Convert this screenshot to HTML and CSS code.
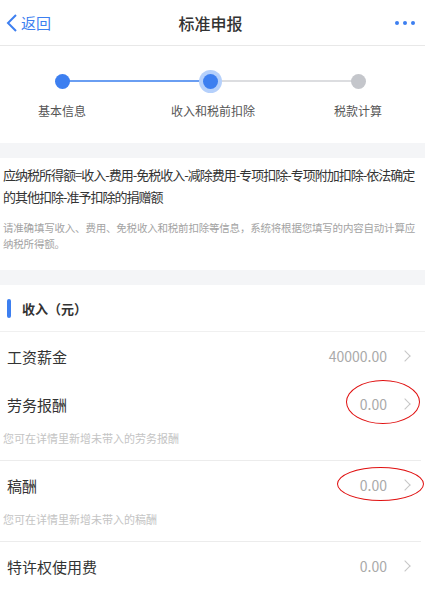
FILE: index.html
```html
<!DOCTYPE html>
<html lang="zh-CN">
<head>
  <meta charset="UTF-8">
  <title>标准申报</title>
  <meta name="viewport" content="width=device-width, initial-scale=1.0">
  <link rel="stylesheet" href="styles.css">
</head>
<body>
  <div class="header">
    <a class="back" href="#">
      <svg width="12" height="20" viewBox="0 0 12 20"><path d="M10 2 L2 10 L10 18" fill="none" stroke="#3d7ff0" stroke-width="2"/></svg>
      <span>返回</span>
    </a>
    <h1>标准申报</h1>
    <div class="more"><i></i><i></i><i></i></div>
  </div>

  <div class="steps">
    <div class="track">
      <div class="line done"></div>
      <div class="line"></div>
      <span class="dot done first"></span>
      <span class="dot current"></span>
      <span class="dot last"></span>
    </div>
    <div class="step-labels">
      <span>基本信息</span>
      <span>收入和税前扣除</span>
      <span>税款计算</span>
    </div>
  </div>

  <div class="gap"></div>

  <div class="intro">
    <p class="formula">应纳税所得额=收入-费用-免税收入-减除费用-专项扣除-专项附加扣除-依法确定的其他扣除-准予扣除的捐赠额</p>
    <p class="note">请准确填写收入、费用、免税收入和税前扣除等信息，系统将根据您填写的内容自动计算应纳税所得额。</p>
  </div>

  <div class="gap"></div>

  <div class="section-title"><span class="bar"></span>收入（元）</div>

  <div class="item">
    <div class="row"><span class="label">工资薪金</span><span class="value">40000.00</span><span class="arrow"></span></div>
  </div>
  <div class="item">
    <div class="row"><span class="label">劳务报酬</span><span class="value">0.00</span><span class="arrow"></span><span class="ring ring-a"></span></div>
    <div class="hint">您可在详情里新增未带入的劳务报酬</div>
  </div>
  <div class="item bordered">
    <div class="row"><span class="label">稿酬</span><span class="value">0.00</span><span class="arrow"></span><span class="ring ring-b"></span></div>
    <div class="hint">您可在详情里新增未带入的稿酬</div>
  </div>
  <div class="item bordered">
    <div class="row"><span class="label">特许权使用费</span><span class="value">0.00</span><span class="arrow"></span></div>
  </div>
</body>
</html>
```

FILE: styles.css
```css
body {
  margin: 0;
  font-family: "Noto Sans CJK SC", "Noto Sans", sans-serif;
  background: #fff;
  color: #333;
  overflow: hidden;
}

p {
  margin: 0;
}

.header {
  height: 45px;
  display: flex;
  align-items: center;
  justify-content: space-between;
  padding: 0 10px 0 6px;
  border-bottom: 1px solid #e8e8e8;
}

.back {
  display: flex;
  align-items: center;
  gap: 3px;
  width: 80px;
  color: #3d7ff0;
  text-decoration: none;
  font-size: 15px;
}

.header h1 {
  margin: 0;
  font-size: 16px;
  font-weight: 500;
  color: #333;
}

.more {
  width: 80px;
  display: flex;
  justify-content: flex-end;
  gap: 4px;
}

.more i {
  width: 4px;
  height: 4px;
  border-radius: 50%;
  background: #3d7ff0;
}

.steps {
  height: 97px;
}

.track {
  position: relative;
  height: 56px;
}

.line {
  position: absolute;
  top: 34px;
  height: 2px;
  left: 210px;
  width: 148px;
  background: #dcdde0;
}

.line.done {
  left: 62px;
  background: #6a9ef2;
}

.dot {
  position: absolute;
  top: 28px;
  left: 203px;
  width: 15px;
  height: 15px;
  border-radius: 50%;
  background: #c4c6cb;
}

.dot.done {
  background: #3d7ff0;
}

.dot.first {
  left: 55px;
}

.dot.last {
  left: 351px;
}

.dot.current {
  background: #3d7ff0;
  box-shadow: 0 0 0 4px #b5d0fb;
}

.step-labels {
  display: flex;
  justify-content: space-between;
  padding: 0 43px 0 38px;
  font-size: 12px;
  color: #555;
}

.step-labels span:nth-child(2) {
  margin-left: 6px;
}

.gap {
  height: 15px;
  background: #f4f5f7;
}

.intro {
  height: 112px;
  padding: 6px 3px 0;
  box-sizing: border-box;
}

.formula {
  font-size: 13px;
  line-height: 22px;
  letter-spacing: -1px;
  color: #333;
}

.note {
  margin-top: 12px;
  font-size: 10.5px;
  line-height: 16px;
  color: #a3a3a3;
  letter-spacing: -0.2px;
}

.section-title {
  height: 47px;
  display: flex;
  align-items: center;
  padding: 0 0 0 7px;
  font-size: 13px;
  font-weight: bold;
  color: #333;
  border-bottom: 1px solid #f0f0f0;
  box-sizing: border-box;
}

.bar {
  width: 4px;
  height: 19px;
  border-radius: 2px;
  background: #3d7ff0;
  margin: 0 11px 0 0;
}

.item {
  padding: 0 8px 0 0;
  margin: 0 4px 0 0;
}

.item.bordered {
  border-top: 1px solid #ececec;
}

.row {
  position: relative;
  height: 48px;
  display: flex;
  align-items: center;
  padding-left: 7px;
}

.label {
  flex: 1;
  font-size: 15px;
  color: #333;
}

.value {
  font-size: 14px;
  color: #aaa;
}

.arrow {
  width: 7px;
  height: 7px;
  margin: 0 4px 0 14px;
  border-top: 1px solid #c6c6c6;
  border-right: 1px solid #c6c6c6;
  transform: rotate(45deg);
}

.hint {
  padding: 0 0 0 3px;
  font-size: 11px;
  color: #c4c4c4;
  height: 32px;
  line-height: 20px;
}

.ring {
  position: absolute;
  border: 1px solid #e01010;
  border-radius: 50%;
}

.ring-a {
  left: 346px;
  top: 0;
  width: 72px;
  height: 42px;
}

.ring-b {
  left: 337px;
  top: 6px;
  width: 85px;
  height: 32px;
}
```
